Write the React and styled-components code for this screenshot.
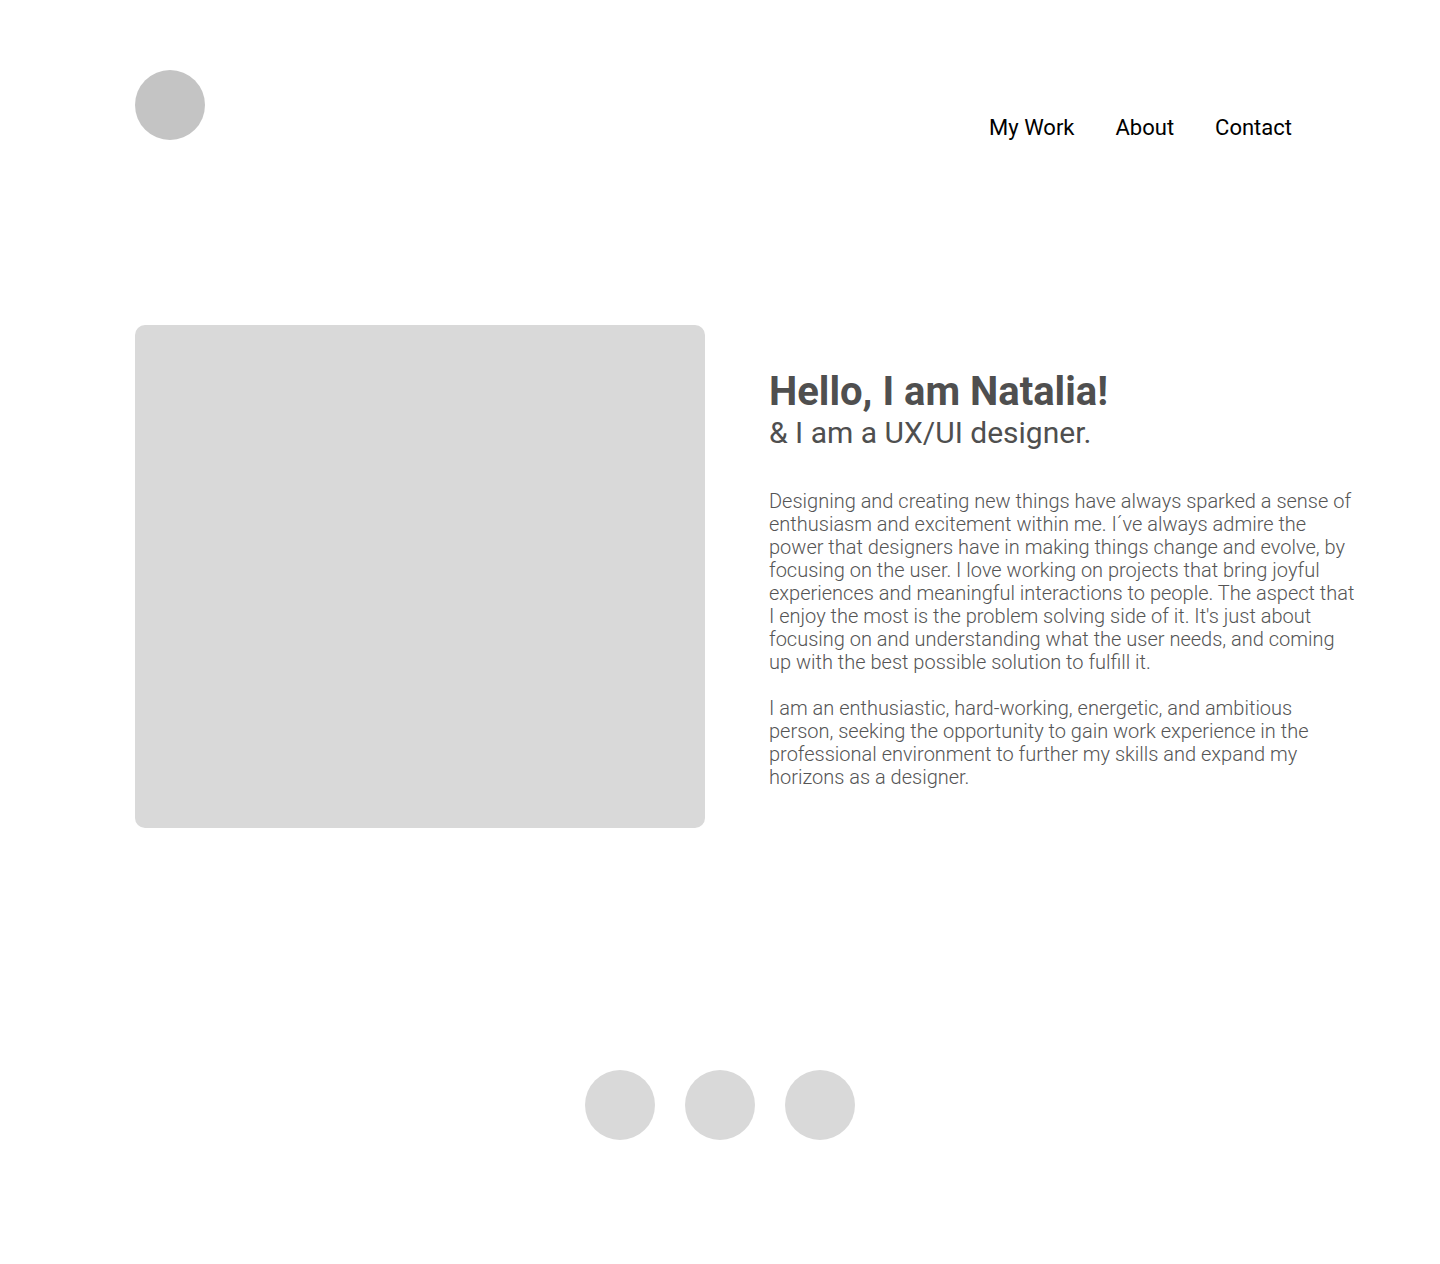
import React from "react";
import styled, { createGlobalStyle } from "styled-components";

const Global = createGlobalStyle`
  html, body { margin: 0; padding: 0; background: #fff; }
  body { font-family: Roboto, "Noto Sans", Arial, sans-serif; }
`;

const Page = styled.div`
  width: 1440px;
  min-height: 1264px;
  box-sizing: border-box;
  padding: 70px 0 0 135px;
`;

const Header = styled.header`
  display: flex;
  justify-content: space-between;
  align-items: flex-start;
  width: 1157px;
  height: 70px;
`;

const Logo = styled.div`
  width: 70px;
  height: 70px;
  border-radius: 50%;
  background: #c4c4c4;
`;

const Nav = styled.nav`
  display: flex;
  gap: 41px;
  margin-top: 45px;
`;

const NavLink = styled.a`
  font-size: 22px;
  line-height: 26px;
  color: #000;
  text-decoration: none;
`;

const Hero = styled.section`
  display: flex;
  gap: 64px;
  margin-top: 185px;
`;

const Photo = styled.div`
  width: 570px;
  height: 503px;
  border-radius: 10px;
  background: #d9d9d9;
  flex-shrink: 0;
`;

const Text = styled.div`
  width: 590px;
  padding-top: 43px;
  color: #4f4f4f;
`;

const Title = styled.h1`
  margin: 0;
  font-size: 40px;
  line-height: 47px;
  font-weight: 700;
`;

const Subtitle = styled.h2`
  margin: 0;
  font-size: 30px;
  line-height: 35px;
  font-weight: 400;
`;

const Para = styled.p`
  margin: ${(p) => (p.$first ? "40px" : "23px")} 0 0;
  font-size: 20px;
  line-height: 23px;
  font-weight: 300;
  color: #555;
`;

const Socials = styled.div`
  display: flex;
  justify-content: center;
  gap: 30px;
  margin-top: 242px;
  margin-left: -135px;
`;

const Dot = styled.div`
  width: 70px;
  height: 70px;
  border-radius: 50%;
  background: #d9d9d9;
`;

export default function App() {
  return (
    <>
      <Global />
      <Page>
        <Header>
          <Logo />
          <Nav>
            <NavLink href="#">My Work</NavLink>
            <NavLink href="#">About</NavLink>
            <NavLink href="#">Contact</NavLink>
          </Nav>
        </Header>
        <Hero>
          <Photo />
          <Text>
            <Title>Hello, I am Natalia!</Title>
            <Subtitle>&amp; I am a UX/UI designer.</Subtitle>
            <Para $first>
              Designing and creating new things have always sparked a sense of
              enthusiasm and excitement within me. I´ve always admire the power
              that designers have in making things change and evolve, by
              focusing on the user. I love working on projects that bring joyful
              experiences and meaningful interactions to people. The aspect that
              I enjoy the most is the problem solving side of it. It's just
              about focusing on and understanding what the user needs, and
              coming up with the best possible solution to fulfill it.
            </Para>
            <Para>
              I am an enthusiastic, hard-working, energetic, and ambitious
              person, seeking the opportunity to gain work experience in the
              professional environment to further my skills and expand my
              horizons as a designer.
            </Para>
          </Text>
        </Hero>
        <Socials>
          <Dot />
          <Dot />
          <Dot />
        </Socials>
      </Page>
    </>
  );
}
